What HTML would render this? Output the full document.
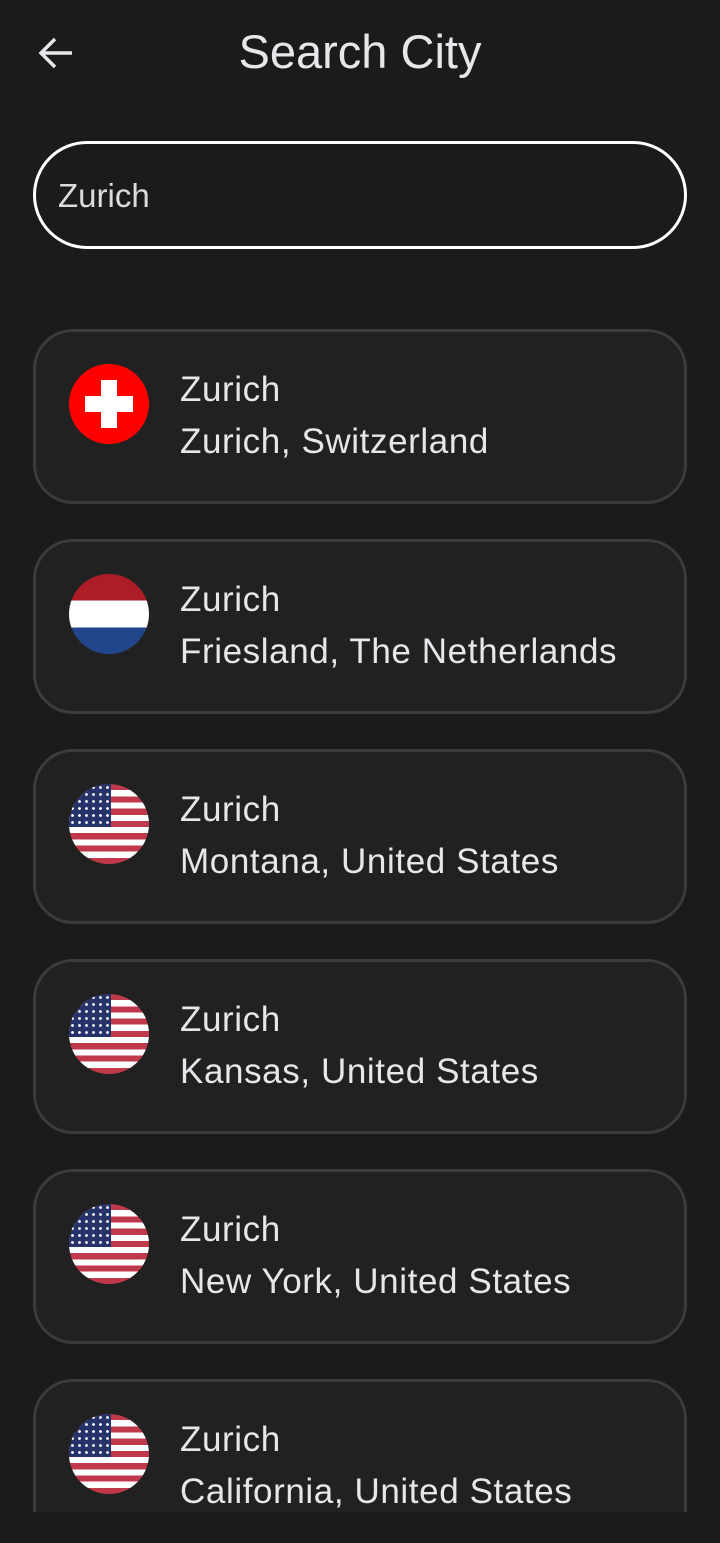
<!DOCTYPE html>
<html><head><meta charset="utf-8"><style>
body{margin:0;width:720px;height:1543px;background:#1b1b1b;font-family:"Liberation Sans",sans-serif;color:#e8e6ea;position:relative;overflow:hidden}
.title{position:absolute;left:0;width:720px;top:22px;text-align:center;font-size:47px;line-height:60px}
.back{position:absolute;left:38px;top:36px}
.search{position:absolute;left:33px;top:141px;width:648px;height:102px;border:3px solid #fff;border-radius:54px;box-sizing:content-box}
.search span{position:absolute;left:22px;top:33px;font-size:33px;color:#dcdcdc}
.list{position:absolute;left:0;top:320px;width:720px;height:1192px;overflow:hidden}
.card{position:absolute;left:33px;width:648px;height:169px;background:#212121;border:3px solid #3b3b3b;border-radius:40px}
.flag{position:absolute;left:33px;top:32px;width:80px;height:80px;border-radius:50%;overflow:hidden}
.t1{position:absolute;left:144px;top:38px;font-size:35px;line-height:40px;letter-spacing:0.6px}
.t2{position:absolute;left:144px;top:90px;font-size:35px;line-height:40px;letter-spacing:0.6px}
.us{background:repeating-linear-gradient(#c0394a 0 6.15px,#fff 6.15px 12.3px)}
.us::before{content:"";position:absolute;left:0;top:0;width:42px;height:43px;background:#26336b radial-gradient(circle,#fff 1.2px,transparent 1.6px) 0 0/7px 7px}
</style></head><body>
<svg class="back" width="36" height="34" viewBox="0 0 36 34"><path d="M34 17H4M17 3L3 17l14 14" stroke="#e8e6ea" stroke-width="3.5" fill="none"/></svg>
<div class="title">Search City</div>
<div class="search"><span>Zurich</span></div>
<div class="list">
<div class="card" style="top:9px"><div class="flag" style="background:#f00"><div style="position:absolute;left:32px;top:16px;width:16px;height:48px;background:#fff"></div><div style="position:absolute;left:16px;top:32px;width:48px;height:16px;background:#fff"></div></div><div class="t1">Zurich</div><div class="t2">Zurich, Switzerland</div></div>
<div class="card" style="top:219px"><div class="flag" style="background:linear-gradient(#ae1c28 0 33.3%,#fff 33.3% 66.6%,#21468b 66.6%)"></div><div class="t1">Zurich</div><div class="t2">Friesland, The Netherlands</div></div>
<div class="card" style="top:429px"><div class="flag us"></div><div class="t1">Zurich</div><div class="t2">Montana, United States</div></div>
<div class="card" style="top:639px"><div class="flag us"></div><div class="t1">Zurich</div><div class="t2">Kansas, United States</div></div>
<div class="card" style="top:849px"><div class="flag us"></div><div class="t1">Zurich</div><div class="t2">New York, United States</div></div>
<div class="card" style="top:1059px"><div class="flag us"></div><div class="t1">Zurich</div><div class="t2">California, United States</div></div>
</div>
</body></html>
